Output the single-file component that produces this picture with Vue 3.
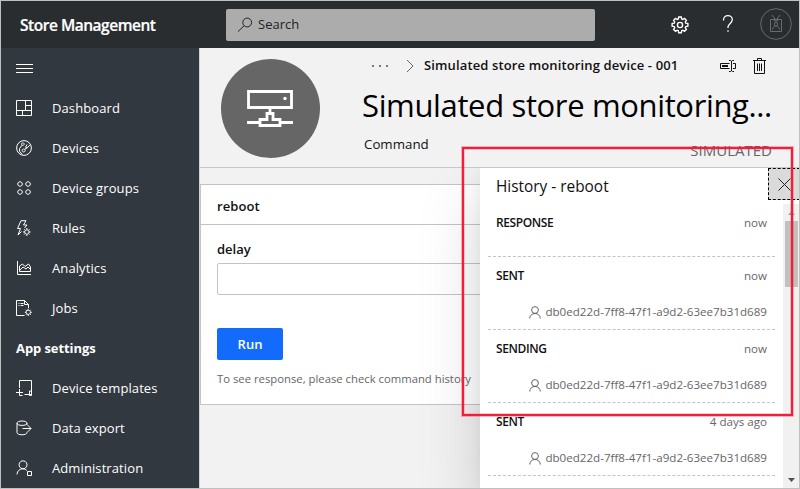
<script setup>
const navItems = [
  { label: 'Dashboard', icon: 'dashboard' },
  { label: 'Devices', icon: 'devices' },
  { label: 'Device groups', icon: 'groups' },
  { label: 'Rules', icon: 'rules' },
  { label: 'Analytics', icon: 'analytics' },
  { label: 'Jobs', icon: 'jobs' }
]
const settingsItems = [
  { label: 'Device templates', icon: 'templates' },
  { label: 'Data export', icon: 'export' },
  { label: 'Administration', icon: 'admin' }
]
const icons = {
  dashboard: 'M.5 .5h15v15H.5z M.5 10.5h9 M9.5 .5v10 M9.5 5.5h6 M9.5 10.5h6 M6.5 10.5v5',
  devices: 'M8 .6a7.4 7.4 0 1 0 0 14.8A7.4 7.4 0 0 0 8 .6 M6.8 2.8a1.3 1.3 0 1 0 .1 0 M6.2 5.2L3.6 8.4v3 M7.6 9a1.5 1.5 0 1 0 .1 0 M11 4.5L9.5 7.2l1.6 .8L14 4.8 M8.6 9.3L11 7.9 M3.6 11.4l2.6 3',
  groups: 'M4 1.7a2.3 2.3 0 1 0 .1 0 M12 1.7a2.3 2.3 0 1 0 .1 0 M4 9.7a2.3 2.3 0 1 0 .1 0 M12 9.7a2.3 2.3 0 1 0 .1 0',
  rules: 'M5 .7h5L7.5 5H11L8.5 8 M5 .7L1.5 8.5h3L2 15l3.5-3.5 M10.8 9.8a2.2 2.2 0 1 0 .1 0 M10.8 8v1.5 M10.8 14.5V16 M7 12h1.5 M13 12h1.5 M8.2 9.3l1 1 M12.4 13.5l1 1 M13.4 9.3l-1 1 M9.2 13.5l-1 1',
  analytics: 'M1.5 1v13.5H15 M3.5 11.5V6l3-2 2.5 2.5L12.5 4l2 3v4.5z M4 10l3-3 3 2 2-2 2.5 2.5',
  jobs: 'M8.5 15.5h-8V.5h8l4 4v3.5 M8.5 .5v4h4 M2.5 3.5h1 M4.5 3.5h3 M2.5 5.5h1 M4.5 5.5h3 M12.2 10.2a2.1 2.1 0 1 0 .1 0 M12.2 8.7v1.5 M12.2 14.4V16 M8.8 12.3h1.4 M14.3 12.3h1.5 M9.8 9.8l1 1 M13.7 13.8l1 1 M14.7 9.8l-1 1 M10.8 13.8l-1 1',
  templates: 'M3.5 8V.5h12v14h-7 M13.5 11v4.5h2V11z M0 12.5h7 M3.5 9v6.5h3',
  export: 'M1 3.2c0-1.3 2.2-2.2 5-2.2s5 .9 5 2.2-2.2 2.2-5 2.2-5-.9-5-2.2v9.4c0 1.3 2.2 2.2 5 2.2s5-.9 5-2.2v-.8 M11 3.2v2 M6.5 8.5H15 M11.8 5.2L15 8.5l-3.2 3.3',
  admin: 'M7 .8a4 4 0 1 0 .1 0 M1 14.5C1.3 10.6 4 8.8 7 8.8c1.6 0 2.8.6 3.8 1.7 M11.5 11.5h4v4h-4z'
}
const user = 'db0ed22d-7ff8-47f1-a9d2-63ee7b31d689'
const history = [
  { state: 'RESPONSE', time: 'now' },
  { state: 'SENT', time: 'now', user },
  { state: 'SENDING', time: 'now', user },
  { state: 'SENT', time: '4 days ago', user }
]
</script>

<template>
  <div class="window">
    <header class="topbar">
      <div class="brand">Store Management</div>
      <div class="search">
        <svg width="16" height="16" viewBox="0 0 16 16"><circle cx="10.2" cy="5.5" r="4.4" /><path d="M7 8.8L1 14.6" /></svg>
        <span>Search</span>
      </div>
      <div class="tools">
        <svg class="gear" width="18" height="18" viewBox="0 0 18 18"><path d="M7.7 1h2.6l.4 2 1.1.5 1.7-1.1 1.9 1.9-1.1 1.7.5 1.1 2.1.5v2.6l-2.1.4-.5 1.2 1.1 1.7-1.9 1.8-1.7-1.1-1.1.5-.4 2.1H7.7l-.4-2.1-1.1-.5-1.7 1.1-1.9-1.8 1.1-1.7-.5-1.2L1.1 10.2V7.6l2.1-.5.5-1.1-1.1-1.7 1.900-1.900 1.700 1.100L7.300 3z" /><circle cx="9" cy="9" r="2.600" /></svg>
        <svg class="help" width="12" height="18" viewBox="0 0 12 18"><path d="M1.500 5.500V5c0-2.600 1.800-4.300 4.400-4.300s4.400 1.600 4.400 3.900c0 3.800-4.300 4.400-4.300 7.500v1 M6 15.200v1.600" /></svg>
        <svg class="avatar" width="32" height="32" viewBox="0 0 32 32"><circle cx="16" cy="16" r="15.300" /><path d="M10.500 11.500h11v12h-11z M12 7l3 4 M20 7l-3 4 M14.500 10v3h3v-3 M12.700 21.500c0-2.300 1.300-3.500 3.300-3.500s3.300 1.200 3.300 3.500" /><circle cx="16" cy="16.200" r="1.800" /></svg>
      </div>
    </header>

    <div class="body">
      <nav class="sidebar">
        <div class="row">
          <svg width="17" height="16" viewBox="0 0 17 16"><path d="M0 4.500h17M0 8.500h17M0 12.500h17" /></svg>
        </div>
        <div v-for="item in navItems" :key="item.label" class="row">
          <svg width="16" height="16" viewBox="0 0 16 16"><path :d="icons[item.icon]" /></svg>
          <span>{{ item.label }}</span>
        </div>
        <div class="row section">App settings</div>
        <div v-for="item in settingsItems" :key="item.label" class="row">
          <svg width="16" height="16" viewBox="0 0 16 16"><path :d="icons[item.icon]" /></svg>
          <span>{{ item.label }}</span>
        </div>
      </nav>

      <main class="main">
        <section class="device">
          <div class="badge">
            <svg width="46" height="38" viewBox="0 0 46 38"><path d="M1.500 1.500h43v16h-43z M23 18v4 M0 32.500h13 M33 32.500h13 M13 29.500h7v-6h6v6h7v6H13z" /><circle cx="38" cy="8.500" r="1.700" /></svg>
          </div>
          <div class="heading">
            <div class="crumbs">
              <svg class="dots" width="16" height="4" viewBox="0 0 16 4"><path d="M0 1h2v2H0zM7 1h2v2H7zM14 1h2v2h-2z" /></svg>
              <svg class="chev" width="8" height="14" viewBox="0 0 8 14"><path d="M1 1l6 6-6 6" /></svg>
              <span class="crumb">Simulated store monitoring device - 001</span>
              <svg class="rename" width="16" height="12" viewBox="0 0 16 12"><path d="M9.500 3.500h-9v5h9 M13 3.500h2.500v5H13 M11.500 1v10 M9 .5h1.500l1 .8 1-.8H14 M9 11.500h1.500l1-.8 1 .8H14" /><path class="thick" d="M2 6h6" /></svg>
              <svg class="trash" width="13" height="16" viewBox="0 0 13 16"><path d="M0 2.500h13 M4.500 2V.5h4V2 M1.500 3v12.500h10V3 M4.500 5.500v7.500 M6.500 5.500v7.500 M8.500 5.500v7.500" /></svg>
            </div>
            <h1>Simulated store monitoring...</h1>
            <div class="kind"><span>Command</span><span class="tag">SIMULATED</span></div>
          </div>
        </section>

        <section class="card">
          <h2>reboot</h2>
          <div class="form">
            <label for="delay">delay</label>
            <input id="delay" type="text">
            <button class="run">Run</button>
            <p>To see response, please check command history</p>
          </div>
        </section>
      </main>
    </div>

    <aside class="panel">
      <div class="panel-head">
        <span class="panel-title">History - reboot</span>
        <div class="close"><svg width="13" height="13" viewBox="0 0 13 13"><path d="M.5 .5l12 12M12.500 .5l-12 12" /></svg></div>
      </div>
      <div class="panel-body">
        <div class="list">
          <div v-for="(entry, i) in history" :key="i" class="entry" :class="{ short: !entry.user }">
            <div class="line"><span class="state">{{ entry.state }}</span><span class="time">{{ entry.time }}</span></div>
            <div v-if="entry.user" class="who">
              <svg width="12" height="13" viewBox="0 0 12 13"><circle cx="6" cy="4" r="3.400" /><path d="M.7 12.500C.9 9.300 3 7.500 6 7.500s5.100 1.800 5.300 5" /></svg>
              <span>{{ entry.user }}</span>
            </div>
          </div>
        </div>
        <div class="scroll">
          <svg width="16" height="17" viewBox="0 0 16 17"><path class="up" d="M5 11l3.500-4 3.500 4z" /></svg>
          <div class="thumb"></div>
          <svg width="16" height="17" viewBox="0 0 16 17"><path class="down" d="M5 7h7l-3.500 4z" /></svg>
        </div>
      </div>
    </aside>
    <div class="highlight"></div>
  </div>
</template>

<style>
body { margin: 0; overflow: hidden; }
</style>

<style scoped>
* { box-sizing: border-box; }
.window {
  position: relative; width: 800px; height: 489px; border: 1px solid #bfc1c1;
  display: flex; flex-direction: column; overflow: hidden;
  background: #f2f2f2; color: #111; font: 13px/20px "Open Sans", "Noto Sans", sans-serif;
}
svg { display: block; flex: none; fill: none; stroke: currentColor; stroke-width: 1; }
.topbar { height: 47px; flex: none; display: flex; align-items: center; background: #2a2d2f; color: #fff; }
.brand { width: 225px; padding-left: 19px; font-size: 15.500px; font-weight: 600; letter-spacing: -.48px; white-space: nowrap; -webkit-text-stroke: .2px #fff; }
.search { width: 369px; height: 32px; display: flex; align-items: center; gap: 5px; padding-left: 11px; border-radius: 2px; background: #acacac; color: #222; }
.search span { margin-top: -2px; }
.tools { display: flex; align-items: center; margin-left: 76px; color: #fff; }
.gear { stroke-width: 1.400; }
.help { margin-left: 33px; stroke-width: 1.300; margin-top: -1px; }
.avatar { margin-left: 26px; color: #696c6d; margin-top: -1px; }
.body { display: flex; flex: 1; min-height: 0; }
.sidebar { width: 199px; flex: none; background: #32383f; color: #fff; border-right: 1px solid #d4d4d4; letter-spacing: .1px; }
.row { height: 40px; display: flex; align-items: center; gap: 20px; padding-left: 15px; white-space: nowrap; }
.section { font-weight: 700; font-size: 13px; letter-spacing: -.08px; }
.main { flex: 1; min-width: 0; }
.device { height: 120px; display: flex; border-bottom: 1px solid #c8c8c8; }
.badge { width: 99px; height: 99px; margin: 10.500px 0 0 20.500px; flex: none; border-radius: 50%; background: #666; color: #fff; display: flex; align-items: center; justify-content: center; }
.badge svg { stroke-width: 2.800; margin-top: 2px; }
.badge circle { fill: #fff; stroke: none; }
.heading { margin-left: 42.500px; width: 412px; }
.crumbs { display: flex; align-items: center; height: 34px; padding: 1px 0 0 10px; color: #111; }
.dots { fill: #777; stroke: none; }
.chev { margin-left: 18px; color: #666; }
.crumb { margin: -2px 0 0 10px; width: 296px; font-weight: 600; font-size: 13px; letter-spacing: .13px; white-space: nowrap; }
.trash { margin-left: 17px; }
.thick { stroke-width: 2; }
h1 { margin: 1px 0 0; font-size: 31px; line-height: 44px; letter-spacing: -.36px; font-weight: 400; white-space: nowrap; color: #000; }
.kind { display: flex; justify-content: space-between; padding: 7px 2px 0 2px; font-size: 13.300px; }
.tag { color: #666; padding-top: 6px; font-size: 15px; }
.card { margin-top: 16px; height: 221px; border: 1px solid #c4c4c4; border-right: 0; background: #fff; }
h2 { margin: 0; height: 40px; padding: 11px 16px 0; border-bottom: 1px solid #c4c4c4; font-size: 13px; line-height: 20px; font-weight: 600; letter-spacing: .1px; }
.form { padding: 14px 16px; display: flex; flex-direction: column; align-items: flex-start; }
label { font-weight: 600; }
input { width: 560px; height: 32px; margin-top: 4px; border: 1px solid #c4c4c4; border-radius: 2px; outline: 0; background: #fff; }
.run { width: 66px; height: 32px; margin-top: 33px; border: 0; border-radius: 2px; background: #136bfb; color: #fff; font: 600 13px/20px "Open Sans", sans-serif; }
p { margin: 9px 0 0; font-size: 11.300px; color: #666; white-space: nowrap; }
.panel { position: absolute; left: 479px; top: 167px; width: 319px; height: 320px; display: flex; flex-direction: column; background: #fff; box-shadow: 0 26px 58px rgba(0,0,0,.17), 0 5px 14px rgba(0,0,0,.05); clip-path: inset(0 0 0 -80px); }
.panel-head { height: 36px; display: flex; justify-content: space-between; flex: none; }
.panel-title { padding: 9px 0 0 16px; font-size: 15.400px; }
.close { width: 32px; height: 32px; margin-right: -1px; display: flex; align-items: center; justify-content: center; background: #dadada; border: 1px dashed #000; color: #222; }
.panel-body { display: flex; flex: 1; min-height: 0; }
.list { width: 303px; padding: 0 8px; flex: none; overflow: hidden; }
.entry { height: 73px; padding: 9px 8px 0; border-bottom: 1px dashed #c4c4c4; font-size: 11.600px; line-height: 20px; }
.entry.short { height: 53px; }
.line, .who { display: flex; justify-content: space-between; align-items: center; }
.who { justify-content: flex-end; gap: 4px; margin-top: 16px; color: #666; }
.state { font-size: 12px; font-weight: 600; letter-spacing: -.4px; }
.time { color: #666; }
.scroll { width: 16px; background: #f1f1f1; display: flex; flex-direction: column; }
.thumb { width: 13px; height: 66px; margin: 0 0 auto 2px; background: #c1c1c1; }
.up { fill: #a3a3a3; stroke: none; }
.down { fill: #505050; stroke: none; }
.highlight { position: absolute; left: 461px; top: 146px; width: 331px; height: 269px; border: 2px solid #f51c3c; box-shadow: 0 0 0 1px rgba(237,27,56,.3), inset 0 0 0 1px rgba(237,27,56,.2); }
</style>
